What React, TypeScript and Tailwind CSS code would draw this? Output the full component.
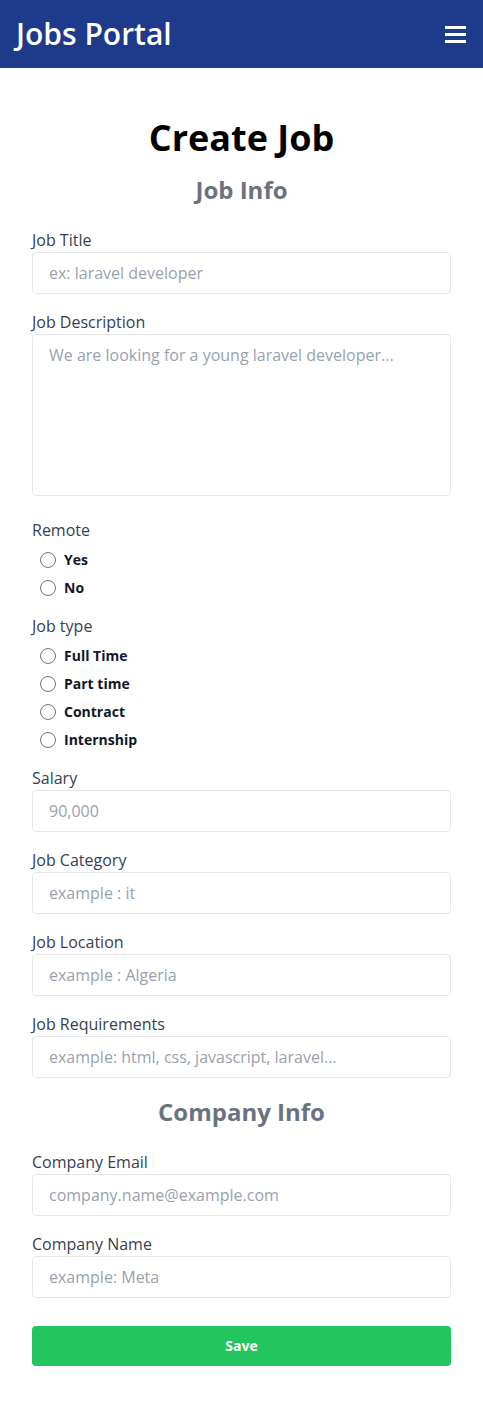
import React from 'react';

const Field: React.FC<{ label: string; placeholder: string; className?: string }> = ({ label, placeholder, className = 'mb-4' }) => (
  <div className={className}>
    <label className="block text-base leading-6 text-gray-700">{label}</label>
    <input
      type="text"
      placeholder={placeholder}
      className="block w-full h-[42px] px-4 border border-gray-200 rounded text-base text-gray-700 placeholder:text-gray-400 outline-none"
    />
  </div>
);

const RadioGroup: React.FC<{ label: string; name: string; options: string[] }> = ({ label, name, options }) => (
  <div className="mb-3">
    <label className="block text-base leading-6 text-gray-700">{label}</label>
    <div className="mt-1 pl-2">
      {options.map((opt) => (
        <label key={opt} className="flex items-center gap-2 h-7">
          <input type="radio" name={name} className="w-4 h-4 appearance-none rounded-full border border-gray-500 bg-white" />
          <span className="text-sm font-bold text-gray-900">{opt}</span>
        </label>
      ))}
    </div>
  </div>
);

export default function App() {
  return (
    <div className="min-h-screen bg-white font-['Segoe_UI','Open_Sans',sans-serif]">
      <header className="h-[68px] bg-[#1e3a8a] flex items-center justify-between px-4">
        <h1 className="text-3xl font-semibold text-white">Jobs Portal</h1>
        <svg width="22" height="20" viewBox="0 0 22 20" className="mr-0">
          <rect x="0" y="2" width="21" height="3" fill="white" />
          <rect x="0" y="9" width="21" height="3" fill="white" />
          <rect x="0" y="16" width="21" height="3" fill="white" />
        </svg>
      </header>

      <main className="px-8 pt-[50px] pb-12">
        <h2 className="text-4xl leading-10 font-bold text-black text-center">Create Job</h2>
        <h3 className="mt-4 text-2xl leading-8 font-bold text-gray-500 text-center">Job Info</h3>

        <form className="mt-[22px]" onSubmit={(e) => e.preventDefault()}>
          <Field label="Job Title" placeholder="ex: laravel developer" />
          <div className="mb-[22px]">
            <label className="block text-base leading-6 text-gray-700">Job Description</label>
            <textarea
              placeholder="We are looking for a young laravel developer..."
              className="block w-full h-[162px] px-4 py-2 border border-gray-200 rounded text-base text-gray-700 placeholder:text-gray-400 outline-none resize-none"
            />
          </div>

          <RadioGroup label="Remote" name="remote" options={['Yes', 'No']} />
          <RadioGroup label="Job type" name="type" options={['Full Time', 'Part time', 'Contract', 'Internship']} />

          <Field label="Salary" placeholder="90,000" />
          <Field label="Job Category" placeholder="example : it" />
          <Field label="Job Location" placeholder="example : Algeria" />
          <Field label="Job Requirements" placeholder="example: html, css, javascript, laravel..." className="mb-[18px]" />

          <h3 className="text-2xl leading-8 font-bold text-gray-500 text-center mb-[22px]">Company Info</h3>

          <Field label="Company Email" placeholder="company.name@example.com" />
          <Field label="Company Name" placeholder="example: Meta" className="mb-7" />

          <button type="submit" className="w-full h-10 rounded bg-[#22c55e] text-white text-sm font-bold">
            Save
          </button>
        </form>
      </main>
    </div>
  );
}
